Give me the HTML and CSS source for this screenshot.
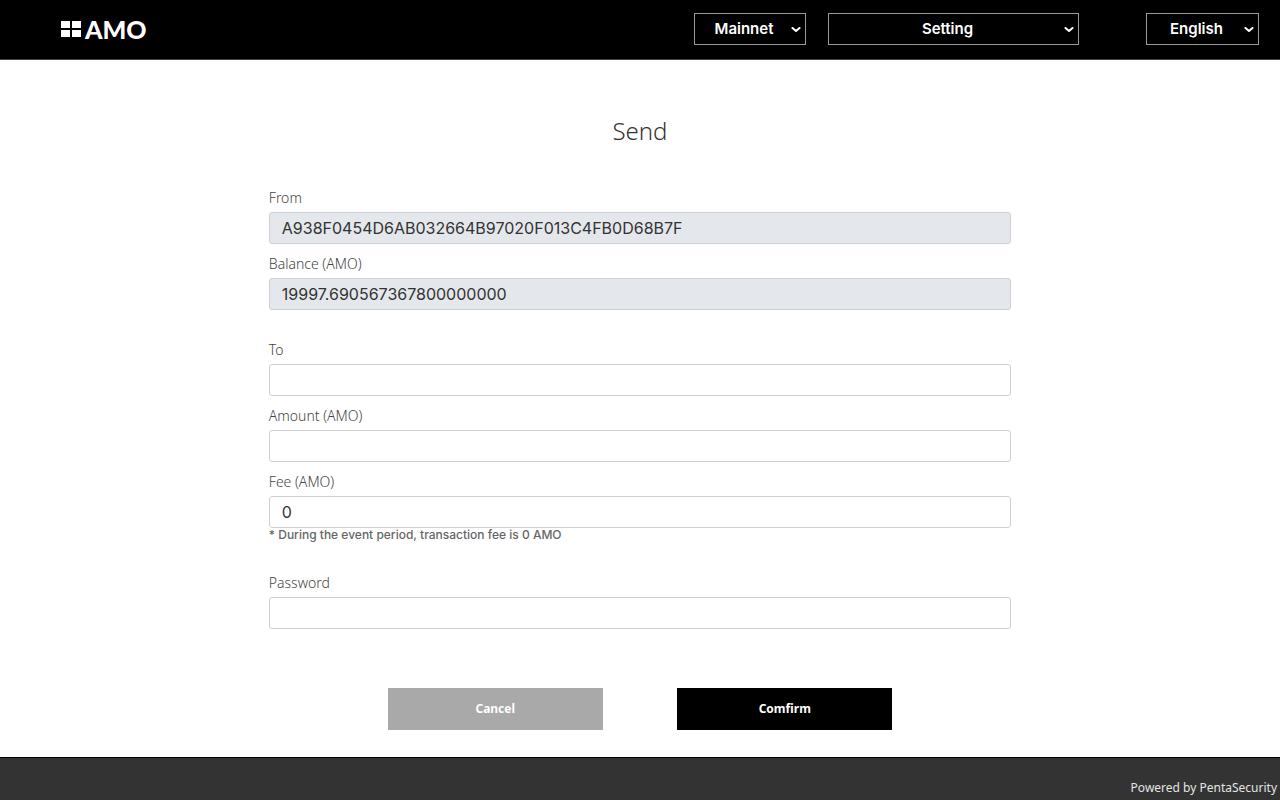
FILE: index.html
```html
<!DOCTYPE html>
<html lang="en">
<head>
<meta charset="utf-8">
<meta name="viewport" content="width=device-width, initial-scale=1">
<title>Send - AMO</title>
<link rel="stylesheet" href="styles.css">
</head>
<body>
<header class="topbar">
  <a class="logo" href="#">
    <svg class="logo-mark" viewBox="0 0 20 16" aria-hidden="true">
      <path fill="currentColor" d="M0 0h9v7H0zM11 0h9v7h-9zM0 9h9v7H0zM11 9h9v7h-9z"/>
    </svg>
    <span>AMO</span>
  </a>
  <nav class="menus">
    <div class="picker picker-network">
      <select aria-label="Network"><option>Mainnet</option></select>
      <svg class="chevron" viewBox="0 0 10 6" aria-hidden="true"><path d="M1.5 1L5 4L8.5 1"/></svg>
    </div>
    <div class="picker picker-setting">
      <select aria-label="Setting"><option>Setting</option></select>
      <svg class="chevron" viewBox="0 0 10 6" aria-hidden="true"><path d="M1.5 1L5 4L8.5 1"/></svg>
    </div>
    <div class="picker picker-language">
      <select aria-label="Language"><option>English</option></select>
      <svg class="chevron" viewBox="0 0 10 6" aria-hidden="true"><path d="M1.5 1L5 4L8.5 1"/></svg>
    </div>
  </nav>
</header>
<main class="content">
  <h1 class="title">Send</h1>
  <form class="form">
    <div class="group">
      <div class="field">
        <label for="from">From</label>
        <input id="from" type="text" value="A938F0454D6AB032664B97020F013C4FB0D68B7F" readonly>
      </div>
      <div class="field">
        <label for="balance">Balance (AMO)</label>
        <input id="balance" type="text" value="19997.690567367800000000" readonly>
      </div>
    </div>
    <div class="group">
      <div class="field">
        <label for="to">To</label>
        <input id="to" type="text">
      </div>
      <div class="field">
        <label for="amount">Amount (AMO)</label>
        <input id="amount" type="text">
      </div>
      <div class="field">
        <label for="fee">Fee (AMO)</label>
        <input id="fee" type="text" value="0">
        <small class="note">* During the event period, transaction fee is 0 AMO</small>
      </div>
    </div>
    <div class="group">
      <div class="field">
        <label for="password">Password</label>
        <input id="password" type="password">
      </div>
    </div>
    <div class="actions">
      <button class="btn btn-cancel" type="button">Cancel</button>
      <button class="btn btn-confirm" type="button">Comfirm</button>
    </div>
  </form>
</main>
<footer class="footer">Powered by PentaSecurity</footer>
</body>
</html>
```
FILE: styles.css
```css
* { box-sizing: border-box; }

body {
  margin: 0;
  min-height: 100vh;
  display: flex;
  flex-direction: column;
  background: #fff;
  color: #333;
  font-family: "Noto Sans", "Open Sans", sans-serif;
}

.topbar {
  display: flex;
  align-items: center;
  justify-content: space-between;
  height: 60px;
  padding: 0 21px 1px 61px;
  background: #000;
  border-bottom: 1px solid #444;
}

.logo {
  display: flex;
  align-items: center;
  gap: 4px;
  color: #fff;
  text-decoration: none;
  font: 900 25px/24px Lato, sans-serif;
}

.logo-mark { width: 20px; height: 16px; }

.menus { display: flex; }

.picker { position: relative; }
.picker-network { width: 112px; margin-right: 22px; }
.picker-setting { width: 251px; margin-right: 67px; }
.picker-language { width: 113px; }

.picker select {
  display: block;
  appearance: none;
  width: 100%;
  height: 32px;
  padding: 0 12px 0 0;
  border: 1px solid #999;
  border-radius: 0;
  background: #000;
  color: #fff;
  font: 600 15px/20px Inter, sans-serif;
  text-align: center;
  text-align-last: center;
}

.chevron {
  position: absolute;
  right: 5px;
  top: 14px;
  width: 10px;
  height: 6px;
  fill: none;
  stroke: #fff;
  stroke-width: 2;
  stroke-linecap: round;
  stroke-linejoin: round;
  pointer-events: none;
}

.content {
  flex: 1;
  width: 58%;
  margin: 0 auto;
  padding-top: 55px;
}

.title {
  margin: 0 0 39px;
  text-align: center;
  font-size: 24px;
  line-height: 32px;
  font-weight: 300;
}

.group { margin-bottom: 29px; }
.group:first-child { margin-bottom: 28px; }

.field + .field { margin-top: 8px; }

.field label {
  display: block;
  margin-bottom: 2px;
  color: #444;
  font-size: 14px;
  line-height: 24px;
  font-weight: 300;
}

.field input {
  display: block;
  width: 100%;
  height: 32px;
  padding: 0 12px;
  border: 1px solid #ced0d3;
  border-radius: 3px;
  background: #fff;
  color: #333;
  font: 400 16px/20px Inter, sans-serif;
}

.field input:read-only { background: #e4e7eb; }

.note {
  display: block;
  color: #666;
  font: 500 12px/14px Inter, sans-serif;
}

.actions {
  display: flex;
  justify-content: center;
  gap: 10%;
  margin-top: 59px;
}

.btn {
  width: 29%;
  height: 42px;
  border: 0;
  color: #fff;
  font: 700 12px/16px "Noto Sans", sans-serif;
}

.btn-cancel { background: #a9a9a9; }
.btn-confirm { background: #000; }

.footer {
  height: 43px;
  padding: 21px 3px 0;
  border-top: 1px solid #000;
  background: #333;
  color: #e4e4e4;
  text-align: right;
  font-size: 12px;
  line-height: 18px;
}
```
